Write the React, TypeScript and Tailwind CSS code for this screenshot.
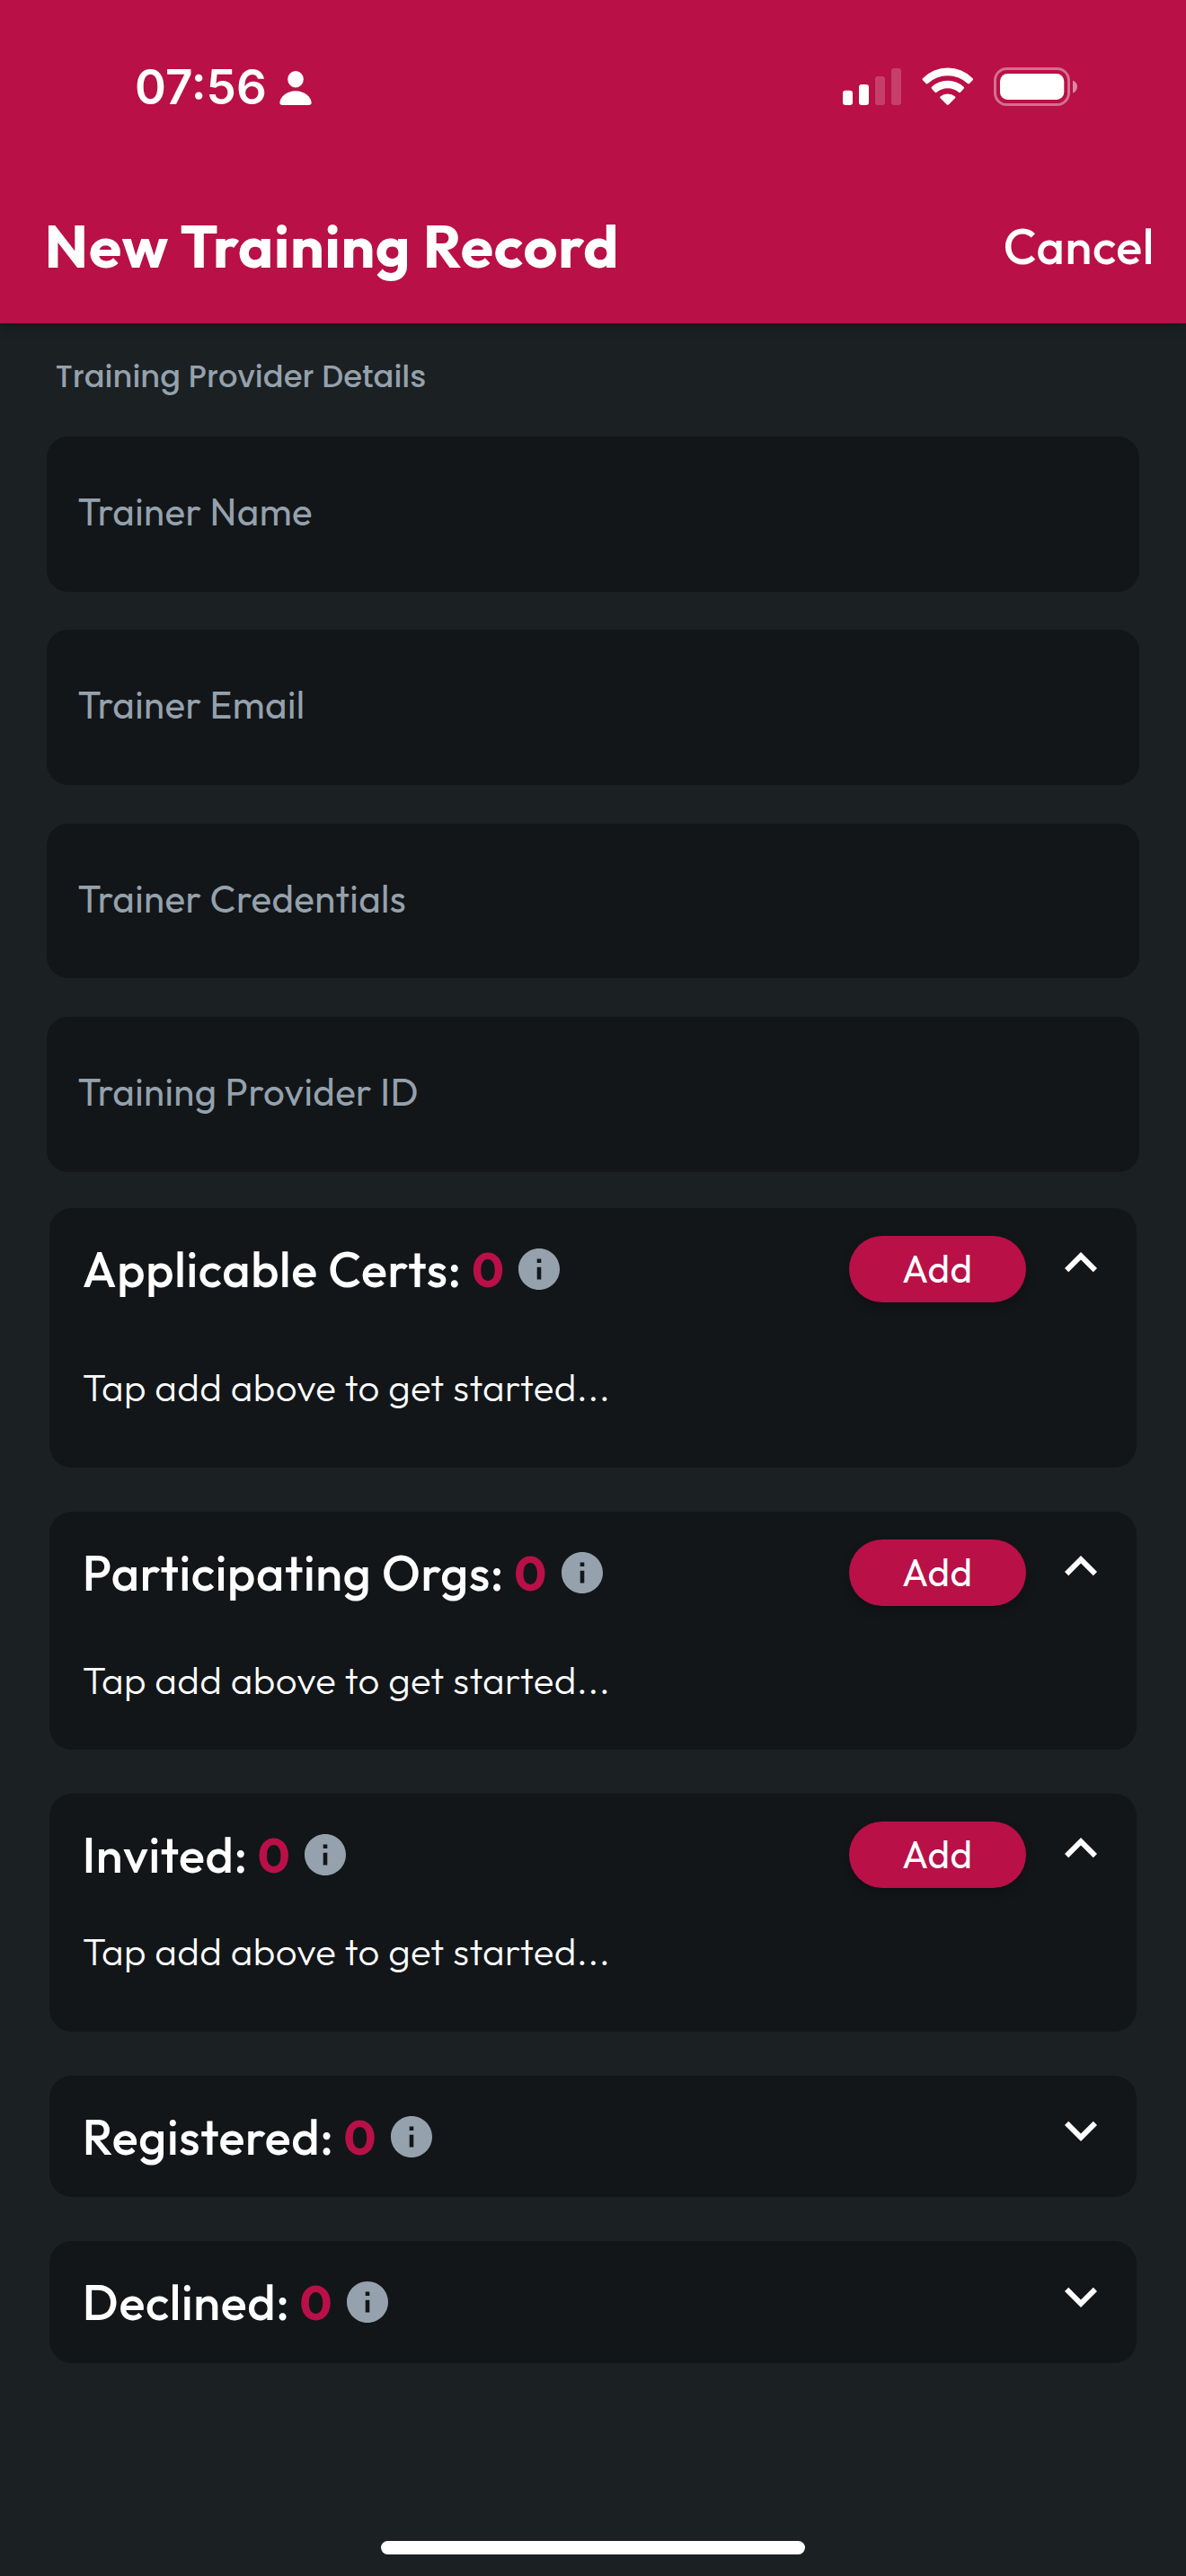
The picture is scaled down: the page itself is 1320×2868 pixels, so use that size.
import React from 'react'

const fields = ['Trainer Name', 'Trainer Email', 'Trainer Credentials', 'Training Provider ID']

type Section = { title: string; count: number; open: boolean; height: string; hintGap?: string }

const sections: Section[] = [
  { title: 'Applicable Certs:', count: 0, open: true, height: 'h-[289.3px]', hintGap: 'mt-[37px]' },
  { title: 'Participating Orgs:', count: 0, open: true, height: 'h-[264.9px]', hintGap: 'mt-[25px]' },
  { title: 'Invited:', count: 0, open: true, height: 'h-[264.9px]', hintGap: 'mt-[13px]' },
  { title: 'Registered:', count: 0, open: false, height: 'h-[135.5px]' },
  { title: 'Declined:', count: 0, open: false, height: 'h-[135.5px]' },
]

function PersonIcon() {
  return (
    <svg className="h-[38px] w-[36px]" viewBox="0 0 36 38" fill="#fff">
      <ellipse cx="18" cy="9.2" rx="8.8" ry="9.2" />
      <path d="M3.2 38C1.4 38 .4 37 .4 35.3C.4 29 8 22.2 18 22.2S35.6 29 35.6 35.3C35.6 37 34.6 38 32.8 38Z" />
    </svg>
  )
}

function SignalIcon() {
  return (
    <svg className="h-[43px] w-[66px]" viewBox="0 0 66 43" fill="#fff">
      <rect x="0" y="25.7" width="11" height="16.3" rx="3" />
      <rect x="18" y="19" width="11" height="23" rx="3" />
      <rect x="36" y="10" width="11" height="32" rx="3" opacity=".2" />
      <rect x="54" y="1" width="11" height="41" rx="3" opacity=".2" />
    </svg>
  )
}

function WifiIcon() {
  return (
    <svg className="h-[43px] w-[58px]" viewBox="0 0 58 43" fill="#fff">
      <path d="M1 12.2A39 39 0 0 1 56.6 12.2Q57.6 13.2 56.6 14.2L53 18Q52 18.9 51 18A32.5 32.5 0 0 0 6.6 18Q5.6 18.9 4.6 18L1 14.2Q0 13.2 1 12.2Z" />
      <path d="M11 21.8A26 26 0 0 1 46.6 21.8Q47.6 22.8 46.6 23.8L43 27.8Q42 28.7 41 27.8A18.5 18.5 0 0 0 16.6 27.8Q15.6 28.7 14.6 27.8L11 23.8Q10 22.8 11 21.8Z" />
      <path d="M20.5 32.5Q19.8 33.4 20.6 34.3L27.8 41.6Q28.8 42.5 29.8 41.6L37 34.3Q37.8 33.4 37.1 32.5A13 13 0 0 0 20.5 32.5Z" />
    </svg>
  )
}

function BatteryIcon() {
  return (
    <svg className="h-[43px] w-[93px]" viewBox="0 0 93 43" fill="none">
      <rect x="1.5" y="1.5" width="82" height="40" rx="13" stroke="#fff" strokeOpacity=".4" strokeWidth="3" />
      <rect x="7" y="7" width="71.3" height="29" rx="8.5" fill="#fff" />
      <path d="M88 14.8C91.2 15.8 93 18.3 93 21.5S91.2 27.5 88 28.5Z" fill="#fff" fillOpacity=".5" />
    </svg>
  )
}

function InfoIcon() {
  return (
    <svg className="ml-[16.5px] size-[46px]" viewBox="2 2 20 20" fill="#95a1ac">
      <path d="M12 2C6.48 2 2 6.48 2 12s4.48 10 10 10 10-4.48 10-10S17.52 2 12 2zm1 15h-2v-6h2v6zm0-8h-2V7h2v2z" />
    </svg>
  )
}

function Chevron({ open }: { open: boolean }) {
  return (
    <svg className="mb-[13px] size-[72px]" viewBox="0 0 24 24" fill="#fff">
      {open ? (
        <path d="M12 8l-6 6 1.41 1.41L12 10.83l4.59 4.58L18 14z" />
      ) : (
        <path d="M16.59 8.59L12 13.17 7.41 8.59 6 10l6 6 6-6z" />
      )}
    </svg>
  )
}

function StatusBar() {
  return (
    <div className="flex h-[188px] items-start justify-between pt-[75px] pr-[121px] pl-[150px]">
      <div className="flex h-[43px] items-center">
        <span className="pt-[2px] font-[Inter,sans-serif] text-[53px] leading-none font-semibold text-white">07:56</span>
        <div className="ml-[14px] pt-[3px]">
          <PersonIcon />
        </div>
      </div>
      <div className="flex h-[43px] items-center">
        <SignalIcon />
        <div className="ml-[22px]">
          <WifiIcon />
        </div>
        <div className="ml-[22px]">
          <BatteryIcon />
        </div>
      </div>
    </div>
  )
}

function SectionCard({ title, count, open, height, hintGap }: Section) {
  return (
    <section className={`rounded-[25px] bg-[#121619] pr-[26px] pl-[36.5px] ${height}`}>
      <div className="flex h-[136px] items-center">
        <h2 className="text-[54px] leading-[68px] font-medium tracking-[0.65px] whitespace-nowrap text-white">{title}</h2>
        <span className="ml-[11px] text-[54px] leading-[68px] font-bold text-[#b81047]">{count}</span>
        <InfoIcon />
        <div className="ml-auto flex items-center gap-[25px]">
          {open && (
            <button className="flex h-[74px] w-[197px] items-center justify-center rounded-full bg-[#b81047] text-[42px] leading-[53px] font-normal tracking-[0.5px] text-white shadow-[0_6px_12px_rgba(0,0,0,0.2)]">
              Add
            </button>
          )}
          <Chevron open={open} />
        </div>
      </div>
      {open && (
        <p className={`text-[42px] leading-[53px] font-light tracking-[0.42px] text-white ${hintGap}`}>
          Tap add above to get started...
        </p>
      )}
    </section>
  )
}

export default function App() {
  return (
    <div className="flex h-[2868px] w-[1320px] flex-col bg-[#1b2023] font-[Outfit,Lato,sans-serif]">
      <header className="h-[360px] shrink-0 bg-[#b81047] shadow-[0_6px_12px_rgba(0,0,0,0.2)]">
        <StatusBar />
        <div className="flex h-[172px] items-center justify-between pr-[35px] pl-[49.5px]">
          <h1 className="text-[66px] leading-[84px] font-bold tracking-[0.78px] text-white">New Training Record</h1>
          <button className="text-[54px] leading-[68px] font-medium tracking-[0.64px] text-white">Cancel</button>
        </div>
      </header>

      <main className="flex grow flex-col pt-[35.5px]">
        <div className="flex h-[90.7px] items-start pl-[61.7px] font-[Poppins,Outfit,sans-serif] text-[33.75px] leading-[47px] font-medium text-[#95a1ac]">
          Training Provider Details
        </div>

        <div className="flex flex-col gap-[42.8px] px-[52px]">
          {fields.map((label) => (
            <div key={label} className="flex h-[172.5px] items-center rounded-[24px] bg-[#121619] pb-[6px] pl-[34.5px]">
              <span className="text-[42px] leading-[53px] font-normal tracking-[0.42px] text-[#95a1ac]">{label}</span>
            </div>
          ))}
        </div>

        <div className="mt-[40px] flex flex-col gap-[49px] px-[55.3px]">
          {sections.map((section) => (
            <SectionCard key={section.title} {...section} />
          ))}
        </div>
      </main>

      <footer className="flex h-[39px] shrink-0 justify-center">
        <div className="h-[15px] w-[472px] rounded-full bg-white" />
      </footer>
    </div>
  )
}
